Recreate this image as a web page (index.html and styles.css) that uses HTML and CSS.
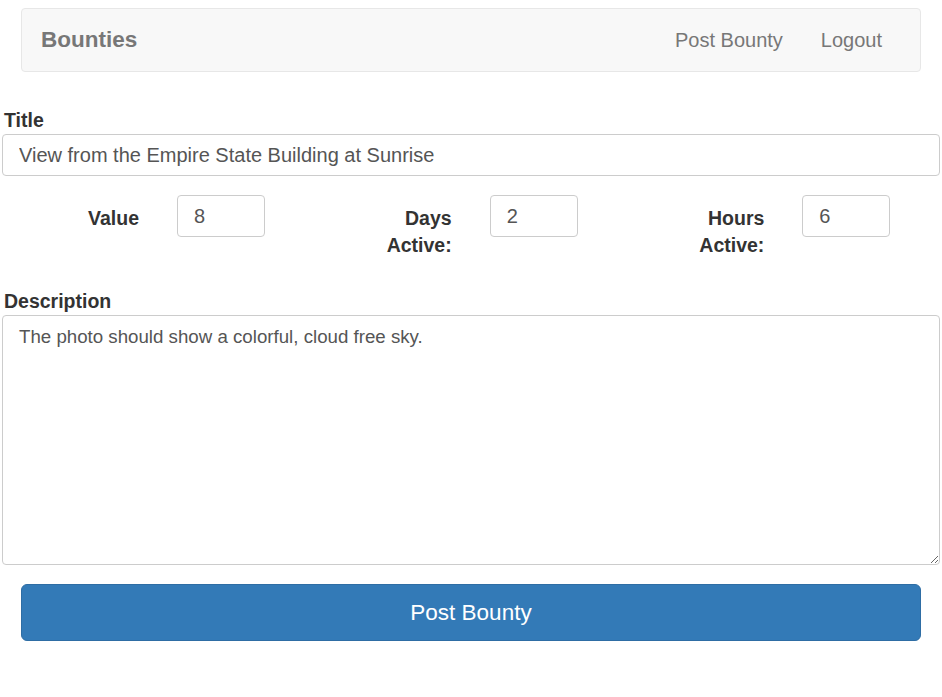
FILE: index.html
```html
<!DOCTYPE html>
<html lang="en">
<head>
<meta charset="utf-8">
<title>Post Bounty</title>
<link rel="stylesheet" href="styles.css">
</head>
<body>
<nav class="navbar">
  <a class="brand" href="#">Bounties</a>
  <ul class="nav-links">
    <li><a href="#">Post Bounty</a></li>
    <li><a href="#">Logout</a></li>
  </ul>
</nav>
<form class="bounty-form">
  <div class="form-group">
    <label class="field-label" for="title">Title</label>
    <input class="form-control" id="title" type="text" value="View from the Empire State Building at Sunrise">
  </div>
  <div class="number-row">
    <div class="number-col">
      <label class="inline-label" for="value">Value</label>
      <input class="form-control small-input" id="value" type="text" value="8">
    </div>
    <div class="number-col">
      <label class="inline-label" for="days">Days Active:</label>
      <input class="form-control small-input" id="days" type="text" value="2">
    </div>
    <div class="number-col">
      <label class="inline-label" for="hours">Hours Active:</label>
      <input class="form-control small-input" id="hours" type="text" value="6">
    </div>
  </div>
  <div class="form-group">
    <label class="field-label" for="desc">Description</label>
    <textarea class="form-control textarea" id="desc">The photo should show a colorful, cloud free sky.</textarea>
  </div>
  <button class="btn-primary" type="button">Post Bounty</button>
</form>
</body>
</html>
```
FILE: styles.css
```css
* { box-sizing: border-box; }

html, body {
  margin: 0;
  background: #fff;
}

body {
  padding: 0 2px;
  font-family: "Liberation Sans", Arial, sans-serif;
  color: #333;
}

.navbar {
  margin: 8px 19px 0;
  height: 64px;
  background: #f8f8f8;
  border: 1px solid #e7e7e7;
  border-radius: 4px;
  display: flex;
  align-items: center;
  justify-content: space-between;
  padding: 0 19px;
}

.brand {
  color: #777;
  font-size: 22.5px;
  font-weight: bold;
  text-decoration: none;
}

.nav-links {
  list-style: none;
  margin: 0;
  padding: 0;
  display: flex;
}

.nav-links a {
  display: block;
  padding: 0 19px;
  color: #777;
  font-size: 20px;
  text-decoration: none;
}

.bounty-form {
  margin-top: 37px;
}

.field-label {
  display: block;
  margin: 0 2px 3px;
  font-size: 19.5px;
  line-height: 22px;
  font-weight: bold;
  color: #333;
}

.form-control {
  display: block;
  width: 100%;
  height: 42px;
  padding: 0 16px;
  font-family: "Liberation Sans", Arial, sans-serif;
  font-size: 20px;
  color: #555;
  background: #fff;
  border: 1px solid #ccc;
  border-radius: 4px;
  outline: none;
}

.number-row {
  display: grid;
  grid-template-columns: repeat(3, 1fr);
  margin-top: 19px;
  margin-bottom: 31px;
}

.number-col {
  display: flex;
  align-items: flex-start;
  gap: 38px;
  padding-left: 37px;
}

.inline-label {
  width: 100px;
  flex: none;
  text-align: right;
  padding-top: 10px;
  font-size: 19.5px;
  line-height: 27px;
  font-weight: bold;
  color: #333;
}

.small-input {
  width: 88px;
  flex: none;
}

.textarea {
  height: 250px;
  padding: 7px 16px;
  font-size: 18.7px;
  line-height: 28.5px;
  resize: vertical;
}

.btn-primary {
  display: block;
  width: calc(100% - 38px);
  margin: 19px 19px 0;
  height: 57px;
  background: #337ab7;
  border: 1px solid #2e6da4;
  border-radius: 6px;
  color: #fff;
  font-family: "Liberation Sans", Arial, sans-serif;
  font-size: 22.5px;
  cursor: pointer;
}
```
